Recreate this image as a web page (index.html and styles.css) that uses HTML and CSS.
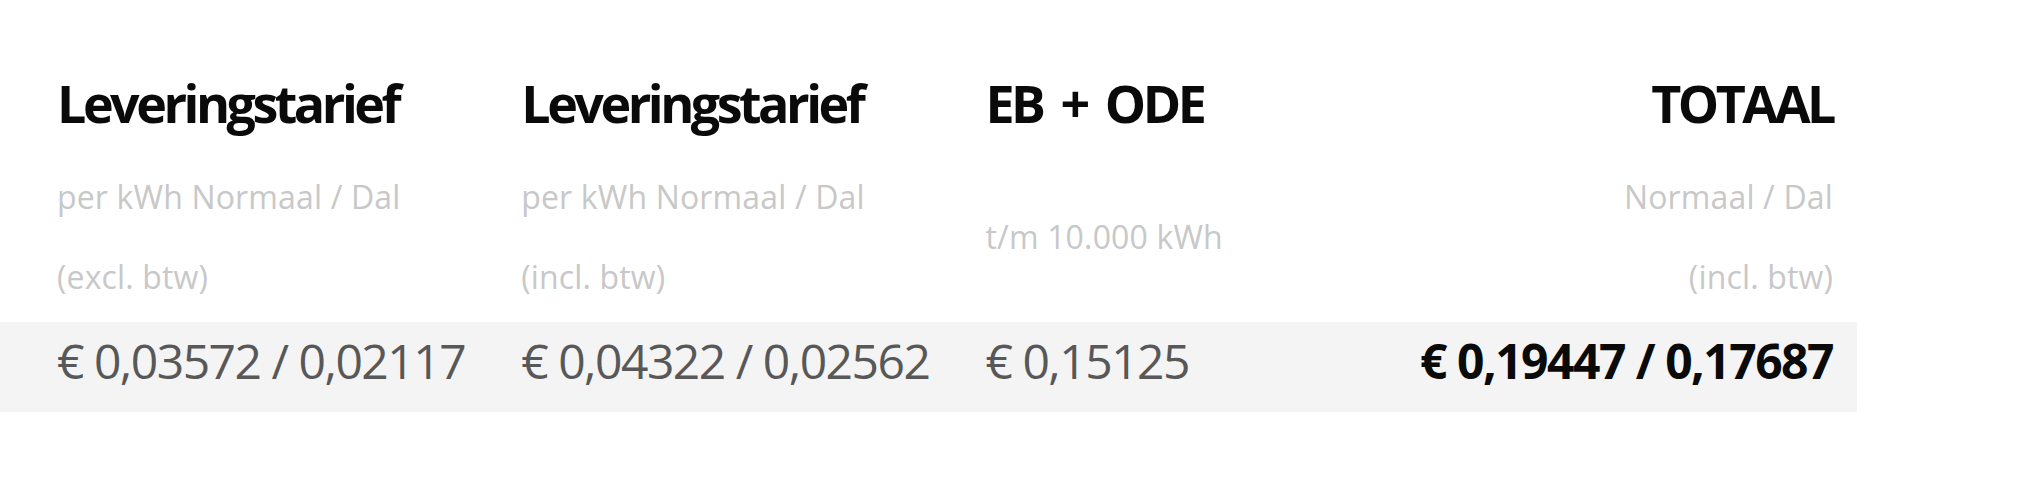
FILE: index.html
```html
<!DOCTYPE html>
<html lang="nl">
<head>
<meta charset="utf-8">
<title>Tarieven</title>
<link rel="stylesheet" href="styles.css">
</head>
<body>
<table class="rates">
  <colgroup>
    <col class="col"><col class="col"><col class="col"><col class="col">
  </colgroup>
  <thead>
    <tr class="titles">
      <th>Leveringstarief</th>
      <th>Leveringstarief</th>
      <th>EB + ODE</th>
      <th class="right">TOTAAL</th>
    </tr>
    <tr class="subs">
      <td><span class="line">per kWh Normaal / Dal</span><span class="line">(excl. btw)</span></td>
      <td><span class="line">per kWh Normaal / Dal</span><span class="line">(incl. btw)</span></td>
      <td><span class="line">t/m 10.000 kWh</span></td>
      <td class="right"><span class="line">Normaal / Dal</span><span class="line">(incl. btw)</span></td>
    </tr>
  </thead>
  <tbody>
    <tr class="values">
      <td>€ 0,03572 / 0,02117</td>
      <td>€ 0,04322 / 0,02562</td>
      <td>€ 0,15125</td>
      <td class="right total">€ 0,19447 / 0,17687</td>
    </tr>
  </tbody>
</table>
</body>
</html>
```
FILE: styles.css
```css
html, body {
  margin: 0;
  padding: 0;
  background: #ffffff;
}

body {
  font-family: "Open Sans", "Liberation Sans", sans-serif;
}

.rates {
  width: 1857px;
  table-layout: fixed;
  border-collapse: collapse;
  border-spacing: 0;
}

.rates .col {
  width: 464px;
}

.rates th,
.rates td {
  padding: 0 0 0 57px;
  text-align: left;
  vertical-align: middle;
}

.rates .right {
  text-align: right;
  padding: 0 24px 0 0;
}

.titles th {
  padding-top: 75px;
  font-size: 52px;
  line-height: 56px;
  font-weight: 700;
  color: #0a0a0a;
  letter-spacing: -3.5px;
  word-spacing: 8px;
  white-space: nowrap;
}

.titles th.right {
  padding-top: 75px;
}

.subs td {
  padding-top: 26px;
  padding-bottom: 5px;
  font-size: 32px;
  line-height: 80px;
  color: #c8c8c8;
  letter-spacing: 0.15px;
  white-space: nowrap;
}

.subs td.right {
  padding-top: 26px;
  padding-bottom: 5px;
}

.subs .line {
  display: block;
}

.values {
  background: #f4f4f4;
}

.values td {
  height: 90px;
  box-sizing: border-box;
  padding-top: 6px;
  padding-bottom: 19px;
  font-size: 48px;
  line-height: 65px;
  color: #585858;
  letter-spacing: -1.5px;
  white-space: nowrap;
}

.values td.right {
  padding-top: 6px;
  padding-bottom: 19px;
}

.values .total {
  font-weight: 700;
  color: #0a0a0a;
  letter-spacing: -1.5px;
}
```
